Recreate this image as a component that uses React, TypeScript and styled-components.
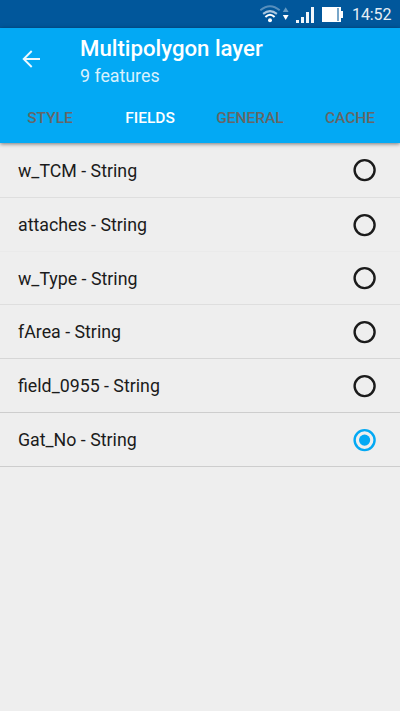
import React from 'react';
import styled, { createGlobalStyle } from 'styled-components';

const GlobalStyle = createGlobalStyle`
  * { box-sizing: border-box; }
  body { margin: 0; background: #eeeeee; font-family: Roboto, sans-serif; }
`;

const Screen = styled.div`
  width: 400px;
  height: 711px;
  display: flex;
  flex-direction: column;
  background: #eeeeee;
  overflow: hidden;
`;

const StatusBar = styled.div`
  height: 28px;
  flex: none;
  display: flex;
  justify-content: flex-end;
  background: #01579b;
`;

const StatusIcons = styled.svg`
  width: 92px;
  height: 28px;
`;

const Clock = styled.time`
  width: 48px;
  color: #e6eef5;
  font-size: 16px;
  line-height: 30px;
  letter-spacing: -0.1px;
  white-space: nowrap;
`;

const AppBar = styled.header`
  height: 115px;
  flex: none;
  display: flex;
  flex-direction: column;
  background: #03a9f4;
  box-shadow: 0 1px 4px rgba(0, 0, 0, 0.5);
`;

const Toolbar = styled.div`
  height: 63px;
  display: flex;
  padding-left: 19px;
`;

const BackButton = styled.button`
  width: 61px;
  height: 63px;
  padding: 0;
  border: 0;
  background: none;
  text-align: left;
  svg { display: block; }
`;

const Titles = styled.div`
  padding-top: 7px;
`;

const Title = styled.h1`
  margin: 0;
  color: #ffffff;
  font-size: 22.2px;
  font-weight: 500;
  line-height: 27px;
  white-space: nowrap;
`;

const Subtitle = styled.div`
  padding-top: 1px;
  color: #d9f1fd;
  font-size: 17.8px;
  line-height: 25px;
`;

const Tabs = styled.nav`
  height: 52px;
  display: grid;
  grid-template-columns: repeat(4, 1fr);
`;

const Tab = styled.button<{ $active?: boolean }>`
  padding: 2px 0 0;
  border: 0;
  background: none;
  color: ${(p) => (p.$active ? '#ffffff' : '#666666')};
  font: 500 15.5px Roboto, sans-serif;
`;

const FieldList = styled.div`
  display: flex;
  flex-direction: column;
`;

const FieldRow = styled.label<{ $line: string; $height: number }>`
  height: ${(p) => p.$height}px;
  display: flex;
  align-items: center;
  justify-content: space-between;
  padding: 0 23px 0 18px;
  border-bottom: 1px solid ${(p) => p.$line};
  color: #1b1b1b;
  font-size: 17.8px;
`;

const RadioIcon = styled.svg`
  width: 24px;
  height: 24px;
  flex: none;
`;

const tabs = ['STYLE', 'FIELDS', 'GENERAL', 'CACHE'];

const fields = [
  { name: 'w_TCM - String', line: '#dedede', height: 55 },
  { name: 'attaches - String', line: '#eaeaea', height: 54 },
  { name: 'w_Type - String', line: '#dedede', height: 53 },
  { name: 'fArea - String', line: '#d6d6d6', height: 54 },
  { name: 'field_0955 - String', line: '#cdcdcd', height: 54 },
  { name: 'Gat_No - String', line: '#cdcdcd', height: 54 },
];

function Radio({ checked }: { checked: boolean }) {
  const color = checked ? '#03a9f4' : '#1b1b1b';
  return (
    <RadioIcon viewBox="0 0 24 24">
      <circle cx="11.6" cy="12.1" r="10" fill="none" stroke={color} strokeWidth="2.4" />
      {checked && <circle cx="11.6" cy="12.1" r="5.6" fill={color} />}
    </RadioIcon>
  );
}

export default function App() {
  const selected = 'Gat_No - String';
  return (
    <Screen>
      <GlobalStyle />
      <StatusBar>
        <StatusIcons viewBox="260 0 92 28">
          <g fill="none" strokeWidth="2">
            <path d="M260.3 10.3Q270 2.2 279.7 10.3" stroke="#578fbd" />
            <path d="M263.1 13.9Q270 8.4 276.9 13.9" stroke="#a9c6df" />
            <path d="M265.4 17Q270 12.4 274.6 17" stroke="#ffffff" />
          </g>
          <circle cx="270" cy="20.3" r="2" fill="#ffffff" />
          <path d="M282.8 12L285.7 7.2L288.6 12Z" fill="#659bc5" />
          <path d="M282.8 15H288.6L285.7 20Z" fill="#ffffff" />
          <path d="M296 20h3v3h-3zM301 17h3v6h-3zM306 12h3v11h-3zM311 7h3v16h-3z" fill="#f1f6fa" />
          <path d="M322 7h19v4h2v7h-2v4h-19z" fill="#ffffff" />
          <path d="M337 8h2v13h-2z" fill="#78a6c9" />
        </StatusIcons>
        <Clock>14:52</Clock>
      </StatusBar>
      <AppBar>
        <Toolbar>
          <BackButton aria-label="Back">
            <svg width="24" height="63" viewBox="0 0 24 63">
              <path d="M21 31H5M12.7 23L4.7 31L12.7 39" fill="none" stroke="#eef8fe" strokeWidth="1.9" />
            </svg>
          </BackButton>
          <Titles>
            <Title>Multipolygon layer</Title>
            <Subtitle>9 features</Subtitle>
          </Titles>
        </Toolbar>
        <Tabs>
          {tabs.map((tab) => (
            <Tab key={tab} $active={tab === 'FIELDS'}>{tab}</Tab>
          ))}
        </Tabs>
      </AppBar>
      <FieldList>
        {fields.map((field) => (
          <FieldRow key={field.name} $line={field.line} $height={field.height}>
            <span>{field.name}</span>
            <Radio checked={field.name === selected} />
          </FieldRow>
        ))}
      </FieldList>
    </Screen>
  );
}
